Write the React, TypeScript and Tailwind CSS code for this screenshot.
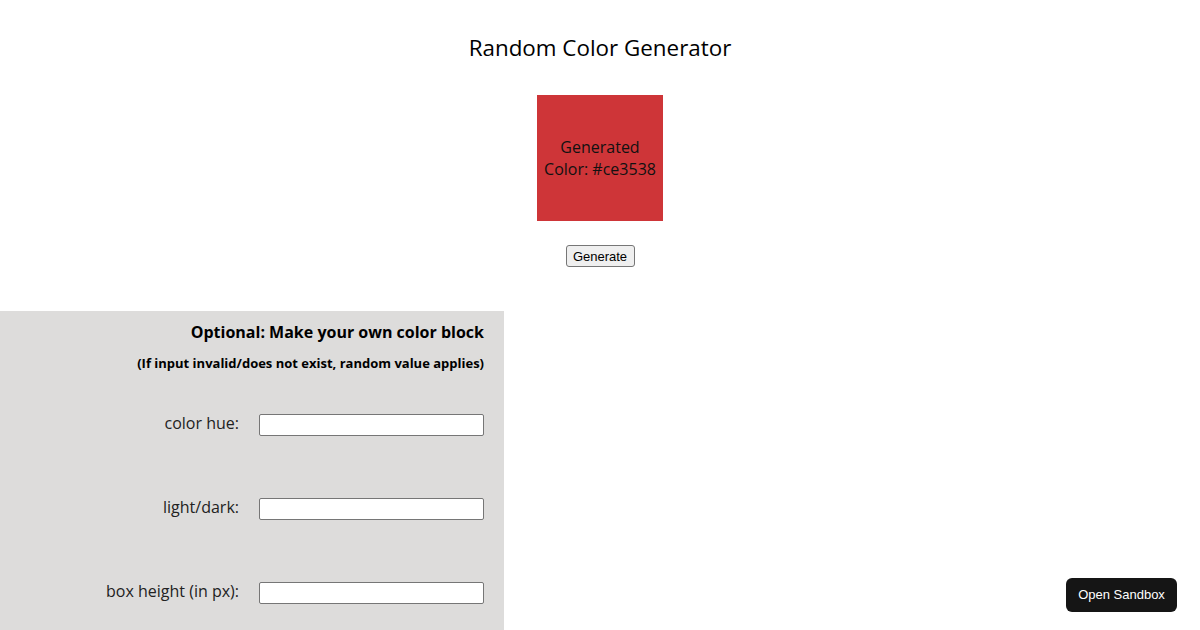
import { useState } from "react";

const FIELDS = ["color hue:", "light/dark:", "box height (in px):"];

export default function App() {
  const [color] = useState("#ce3538");

  return (
    <div className="min-h-[630px] bg-white text-black font-['Open_Sans',sans-serif]">
      <div className="flex flex-col items-center">
        <h1 className="mt-[32px] text-[22.4px] leading-[31px]">Random Color Generator</h1>
        <div
          className="mt-[32px] w-[126px] h-[126px] flex items-center justify-center text-center text-[16px] leading-[22px] text-[#111]"
          style={{ backgroundColor: color }}
        >
          <span>
            Generated
            <br />
            Color: {color}
          </span>
        </div>
        <button
          type="button"
          className="mt-[24px] h-[22px] w-[69px] border border-[#767676] rounded-[3px] bg-[#efefef] text-[13px] font-['Liberation_Sans',sans-serif] leading-none"
        >
          Generate
        </button>
      </div>

      <div className="mt-[44px] w-[504px] bg-[#dddcdb] pt-[10px] pb-[30px] pr-[20px] flex flex-col items-end">
        <p className="text-[16px] leading-[22px] font-bold">Optional: Make your own color block</p>
        <p className="mt-[11px] text-[13px] leading-[18px] font-bold">
          (If input invalid/does not exist, random value applies)
        </p>
        <div className="mt-[42px] flex flex-col gap-[62px]">
          {FIELDS.map((label) => (
            <div key={label} className="flex items-center justify-end">
              <label className="text-[16px] leading-[22px] text-[#222] mr-[20px] -translate-y-[2px]">
                {label}
              </label>
              <input
                type="text"
                className="w-[225px] h-[22px] bg-white border border-[#767676] rounded-[2px]"
              />
            </div>
          ))}
        </div>
      </div>

      <button
        type="button"
        className="fixed right-[23px] bottom-[18px] w-[111px] h-[34px] rounded-md bg-[#151515] text-white text-[13px] font-['Liberation_Sans',sans-serif]"
      >
        Open Sandbox
      </button>
    </div>
  );
}
